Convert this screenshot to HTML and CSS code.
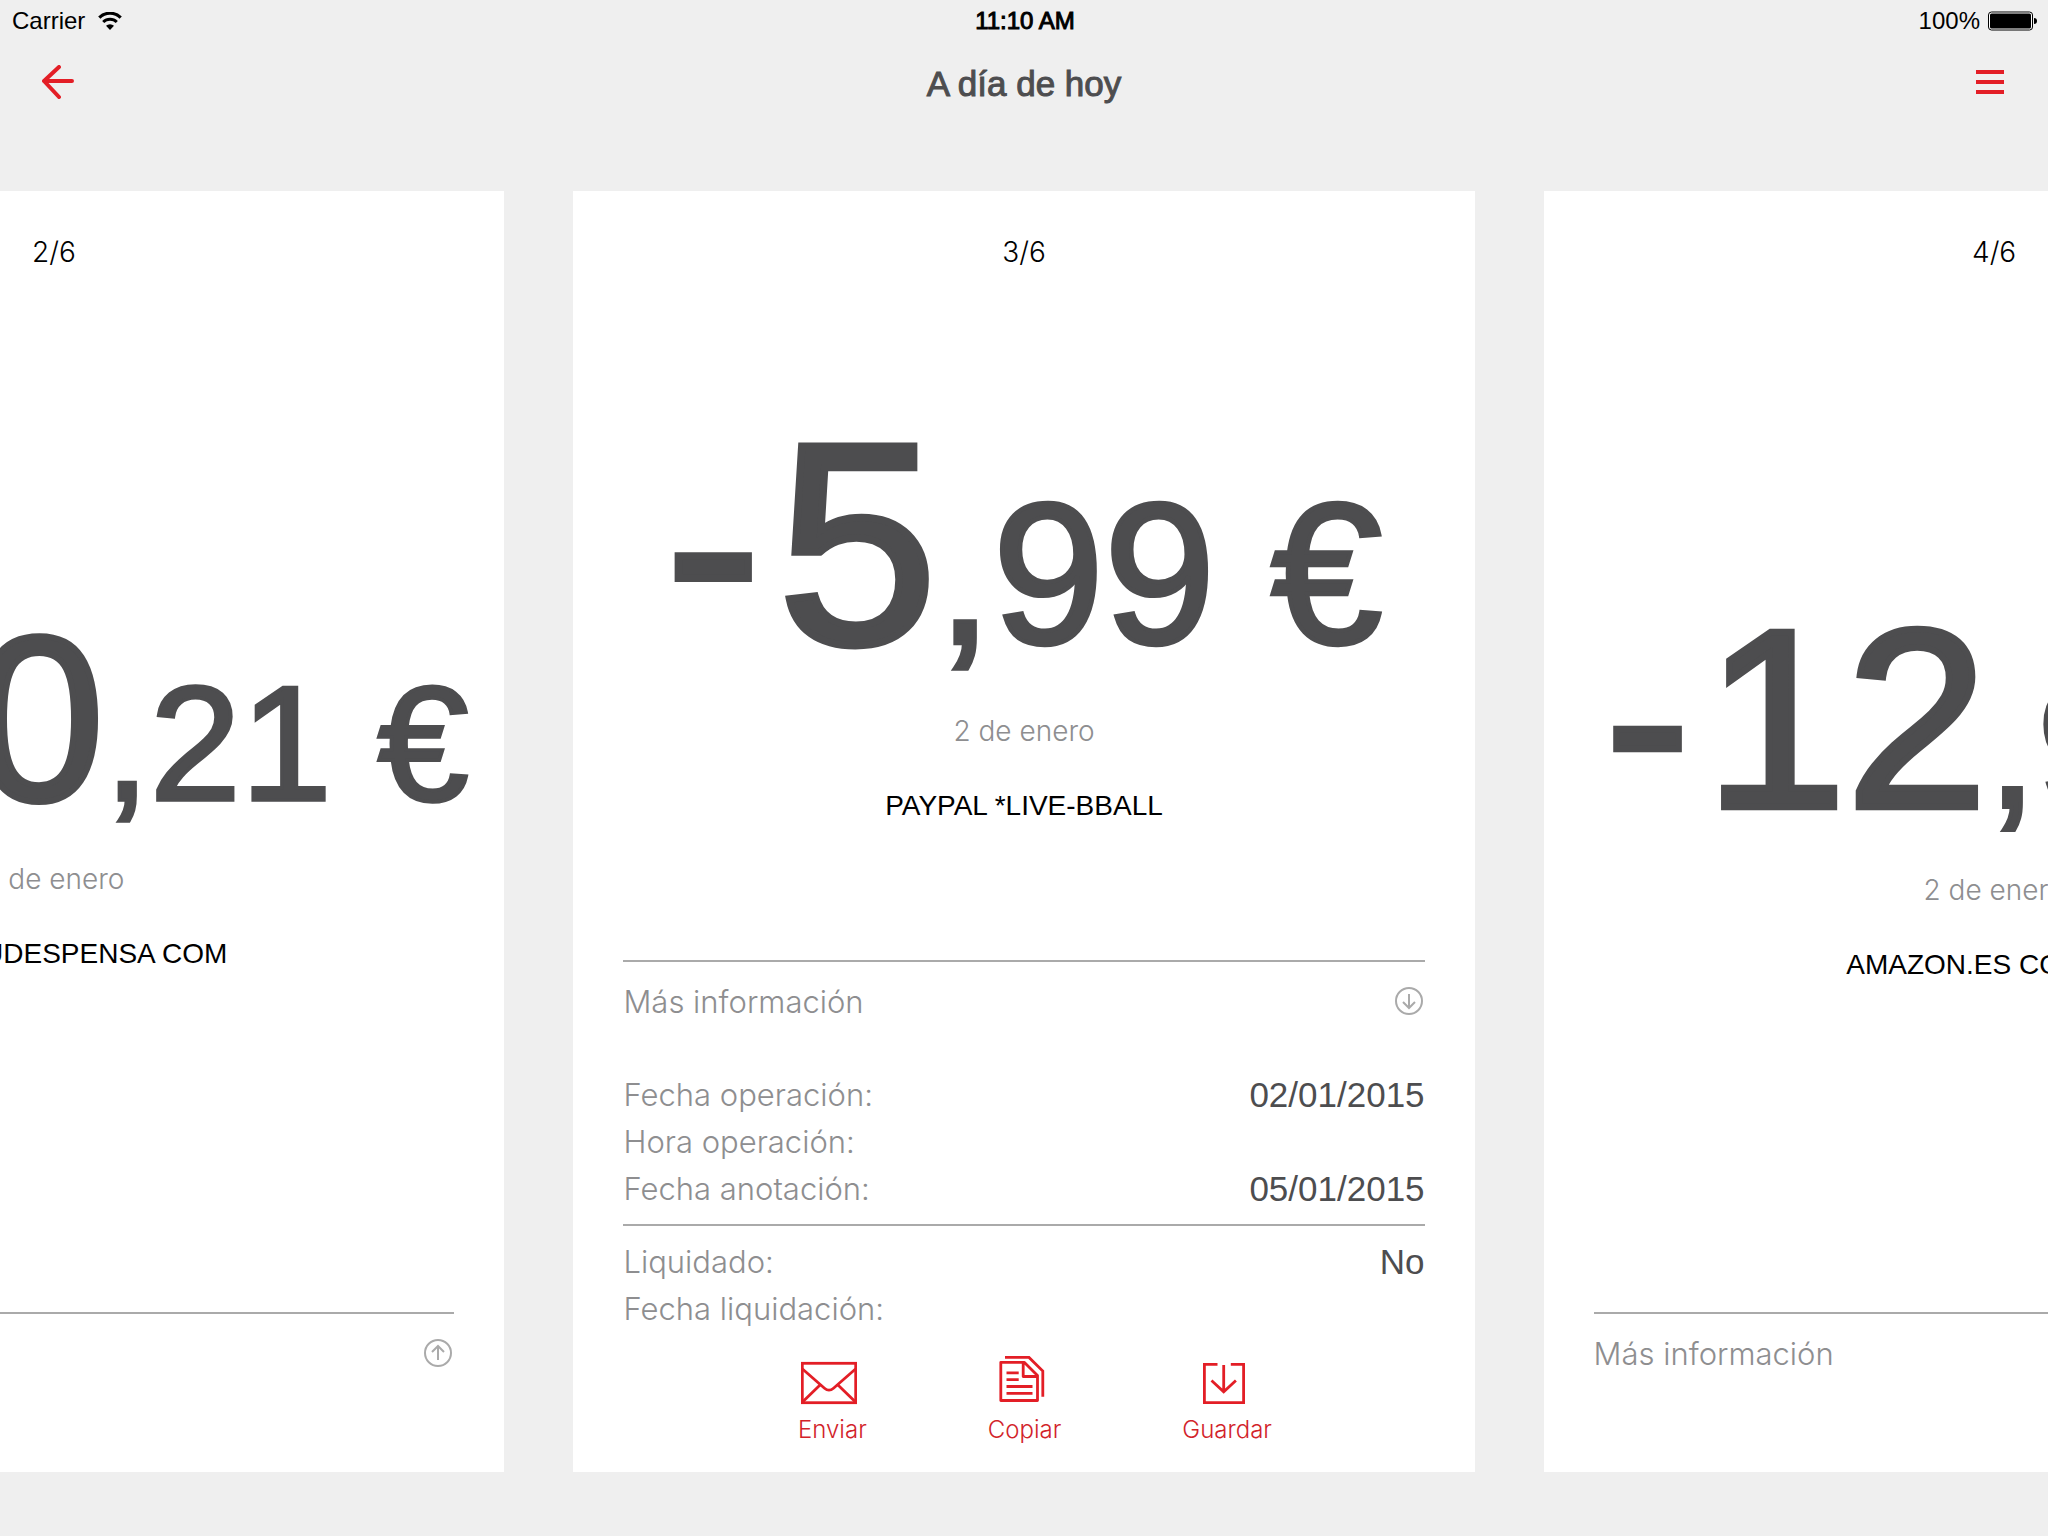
FILE: index.html
```html
<!DOCTYPE html>
<html lang="es">
<head>
  <meta charset="utf-8">
  <meta name="viewport" content="width=device-width, initial-scale=1">
  <title>A día de hoy</title>
  <link rel="stylesheet" href="styles.css">
</head>
<body>
  <div class="page">
    <div class="status">
      <div class="status-side">
        <span>Carrier</span>
        <svg width="24" height="18" viewBox="0 0 24 18" aria-hidden="true">
          <path d="M1.3 5.6a15.3 15.3 0 0 1 21.4 0" fill="none" stroke="#000" stroke-width="3.2"/>
          <path d="M5.2 10a9.8 9.8 0 0 1 13.6 0" fill="none" stroke="#000" stroke-width="3"/>
          <path d="M12 18l-4-4.2a5.8 5.8 0 0 1 8 0z"/>
        </svg>
      </div>
      <span class="status-time">11:10 AM</span>
      <div class="status-side status-right">
        <span>100%</span>
        <svg width="50" height="20" viewBox="0 0 50 20" aria-hidden="true">
          <rect x=".5" y="1" width="44" height="18" rx="3" fill="#fff" stroke="#000"/>
          <rect x="2" y="2.500" width="41" height="15" rx="1.500"/>
          <path d="M46 7c2 0 3 1 3 3s-1 3-3 3z"/>
        </svg>
      </div>
    </div>

    <header class="navbar">
      <button class="nav-button" type="button" aria-label="Volver">
        <svg width="32" height="34" viewBox="0 0 32 34" aria-hidden="true">
          <path d="M17 2L2 16l15 16M2 16h28" fill="none" stroke="#e31e26" stroke-width="4" stroke-linecap="round" stroke-linejoin="round"/>
        </svg>
      </button>
      <h1 class="title">A día de hoy</h1>
      <button class="nav-button" type="button" aria-label="Menú">
        <svg width="28" height="24" viewBox="0 0 28 24" aria-hidden="true">
          <path d="M0 2h28M0 12h28M0 22h28" stroke="#e31e26" stroke-width="4"/>
        </svg>
      </button>
    </header>

    <main class="carousel">
      <article class="card">
        <p class="count">2/6</p>
        <div class="summary">
          <p class="amount amount-long"><span class="sign">-</span>110<span class="cents">,21 €</span></p>
          <p class="date">2 de enero</p>
          <p class="merchant">WWW.TUDESPENSA COM</p>
        </div>
        <section class="info">
          <button class="toggle" type="button" aria-expanded="false">
            <span>Más información</span>
            <svg width="28" height="28" viewBox="0 0 28 28" aria-hidden="true">
              <g fill="none" stroke="#aaa" stroke-width="2"><circle cx="14" cy="14" r="13"/><path d="M14 21V7M8 13l6-6 6 6"/></g>
            </svg>
          </button>
        </section>
      </article>

      <article class="card">
        <p class="count">3/6</p>
        <div class="summary">
          <p class="amount"><span class="sign">-</span>5<span class="cents">,99 €</span></p>
          <p class="date">2 de enero</p>
          <p class="merchant">PAYPAL *LIVE-BBALL</p>
        </div>
        <section class="info info-open">
          <button class="toggle" type="button" aria-expanded="true">
            <span>Más información</span>
            <svg width="28" height="28" viewBox="0 0 28 28" aria-hidden="true">
              <g fill="none" stroke="#aaa" stroke-width="2"><circle cx="14" cy="14" r="13"/><path d="M14 7v14M8 15l6 6 6-6"/></g>
            </svg>
          </button>
          <dl class="details">
            <div class="row"><dt>Fecha operación:</dt><dd>02/01/2015</dd></div>
            <div class="row"><dt>Hora operación:</dt><dd></dd></div>
            <div class="row"><dt>Fecha anotación:</dt><dd>05/01/2015</dd></div>
          </dl>
          <dl class="details details-settled">
            <div class="row"><dt>Liquidado:</dt><dd>No</dd></div>
            <div class="row"><dt>Fecha liquidación:</dt><dd></dd></div>
          </dl>
          <div class="actions">
            <button class="action" type="button">
              <svg width="56" height="50" viewBox="0 0 56 50" aria-hidden="true">
                <g fill="none" stroke="#e31e26" stroke-width="2.800">
                  <rect x="1.300" y="7.300" width="53.400" height="39.400"/>
                  <path d="M1.500 13l22 19.200c3 2.600 6 2.600 9 0L54.500 13M1.500 46l17-16.500M54.500 46l-17-16.500"/>
                </g>
              </svg>
              <span>Enviar</span>
            </button>
            <button class="action" type="button">
              <svg width="46" height="50" viewBox="0 0 46 50" aria-hidden="true">
                <g fill="none" stroke="#e31e26" stroke-width="2.800" stroke-linejoin="round">
                  <path d="M1.800 6.300h23.400L38.500 19.500v25H1.800zM24.200 6.500v14h14"/>
                  <path d="M6 1.400h24L43.800 15v25.700" stroke-linejoin="miter"/>
                  <path d="M7.500 16.800h12.200M7.500 23.600h12.200M7.500 30.500h26M7.500 37.300h26"/>
                </g>
              </svg>
              <span>Copiar</span>
            </button>
            <button class="action" type="button">
              <svg width="42" height="50" viewBox="0 0 42 50" aria-hidden="true">
                <g fill="none" stroke="#e31e26" stroke-width="2.800">
                  <path d="M14.500 8.300H1.400v38.400h39.200V8.300H27.800"/>
                  <path d="M20.700 9v27M8.500 24.500l12.200 11.300L32.900 24.500"/>
                </g>
              </svg>
              <span>Guardar</span>
            </button>
          </div>
        </section>
      </article>

      <article class="card">
        <p class="count">4/6</p>
        <div class="summary">
          <p class="amount amount-medium"><span class="sign">-</span>12<span class="cents">,99 €</span></p>
          <p class="date">2 de enero</p>
          <p class="merchant">AMAZON.ES COMPRA</p>
        </div>
        <section class="info">
          <button class="toggle" type="button" aria-expanded="false">
            <span>Más información</span>
            <svg width="28" height="28" viewBox="0 0 28 28" aria-hidden="true">
              <g fill="none" stroke="#aaa" stroke-width="2"><circle cx="14" cy="14" r="13"/><path d="M14 21V7M8 13l6-6 6 6"/></g>
            </svg>
          </button>
        </section>
      </article>
    </main>
  </div>
</body>
</html>
```
FILE: styles.css
```css
* {
  box-sizing: border-box;
  margin: 0;
  padding: 0;
}

body {
  background: #efefef;
  color: #000;
  font-family: "Liberation Sans", Arial, sans-serif;
}

button {
  border: 0;
  background: none;
  color: inherit;
  font: inherit;
  cursor: pointer;
}

svg {
  display: block;
  flex: none;
}

.page {
  display: flex;
  flex-direction: column;
  min-height: 100vh;
  overflow: hidden;
}

/* Status bar */
.status {
  display: grid;
  grid-template-columns: 1fr auto 1fr;
  align-items: center;
  height: 40px;
  padding: 2px 10px 0 12px;
  font-size: 24px;
}

.status-side {
  display: flex;
  align-items: center;
  gap: 13px;
}

.status-right {
  justify-content: flex-end;
  gap: 8px;
}

.status-time {
  -webkit-text-stroke: 1px #000;
}

/* Navigation bar */
.navbar {
  display: flex;
  align-items: center;
  justify-content: space-between;
  height: 84px;
  padding: 0 34px;
}

.nav-button {
  display: flex;
  align-items: center;
  justify-content: center;
  width: 48px;
  height: 48px;
}

.title {
  padding-top: 4px;
  color: #4d4d4f;
  font-size: 35px;
  font-weight: 400;
  line-height: 40px;
  -webkit-text-stroke: 1px #4d4d4f;
}

/* Cards */
.carousel {
  display: flex;
  flex: 1;
  justify-content: center;
  gap: 69px;
  padding: 67px 0 64px;
}

.card {
  display: flex;
  flex: 0 0 44vw;
  flex-direction: column;
  min-width: 0;
  padding: 42px 50px 0;
  background: #fff;
}

.count {
  font-family: Inter, "Liberation Sans", sans-serif;
  font-size: 28px;
  font-weight: 300;
  line-height: 38px;
  text-align: center;
}

.summary {
  display: flex;
  flex: 1;
  flex-direction: column;
  align-items: center;
  justify-content: center;
  padding-bottom: 20px;
}

.amount {
  color: #4d4d4f;
  font-size: 286px;
  line-height: 1.1;
  white-space: nowrap;
  -webkit-text-stroke: 0.026em #4d4d4f;
}

.amount-medium {
  font-size: 254px;
}

.amount-long {
  font-size: 234px;
}

.sign {
  margin-right: 0.06em;
}

.cents {
  font-size: 70%;
  line-height: 1;
  -webkit-text-stroke: 0.022em #4d4d4f;
}

.date {
  margin-top: 12px;
  color: #8e8e90;
  font-family: Inter, "Liberation Sans", sans-serif;
  font-size: 28px;
  font-weight: 300;
  line-height: 36px;
}

.merchant {
  margin-top: 39px;
  font-size: 28px;
  line-height: 36px;
  white-space: nowrap;
}

/* Expandable information */
.info {
  padding-bottom: 80px;
  border-top: 2px solid #aaa;
}

.info-open {
  padding-bottom: 26px;
}

.toggle {
  display: flex;
  align-items: center;
  justify-content: space-between;
  width: 100%;
  height: 78px;
  padding-right: 2px;
  color: #8e8e90;
  font-family: Inter, "Liberation Sans", sans-serif;
  font-size: 31px;
  font-weight: 300;
}

.details {
  margin-top: 31px;
}

.details-settled {
  margin-top: 12px;
  padding-top: 12px;
  border-top: 2px solid #aaa;
}

.row {
  display: flex;
  justify-content: space-between;
  line-height: 47px;
}

.row dt {
  color: #8e8e90;
  font-family: Inter, "Liberation Sans", sans-serif;
  font-size: 31px;
  font-weight: 300;
}

.row dd {
  color: #4d4d4f;
  font-size: 35px;
}

.actions {
  display: flex;
  justify-content: center;
  gap: 121px;
  margin-top: 24px;
  padding-left: 22px;
}

.action {
  display: flex;
  flex-direction: column;
  align-items: center;
  gap: 8px;
  color: #d2232a;
  font-family: Inter, "Liberation Sans", sans-serif;
  font-size: 24px;
  font-weight: 300;
  line-height: 32px;
}

.action svg {
  margin-right: 6px;
}
```
